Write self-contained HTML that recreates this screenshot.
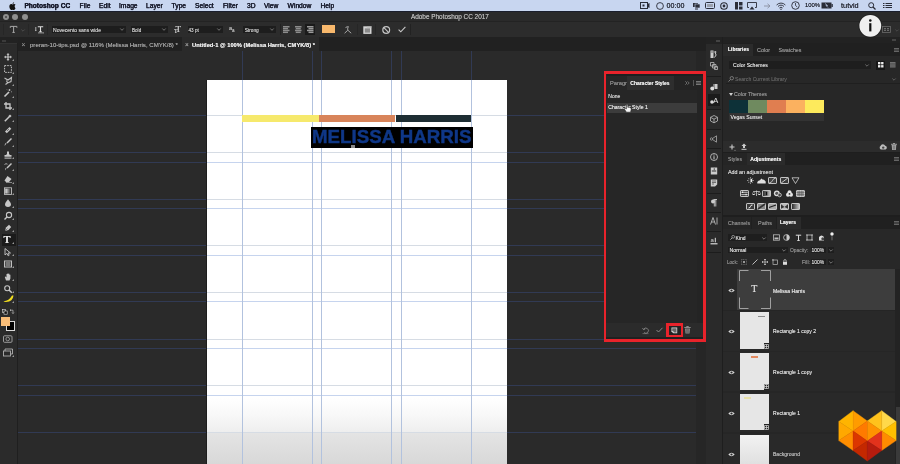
<!DOCTYPE html>
<html><head><meta charset="utf-8">
<style>
*{margin:0;padding:0;box-sizing:border-box}
html,body{width:900px;height:464px;overflow:hidden;background:#2a2a2a;font-family:"Liberation Sans",sans-serif}
.a{position:absolute}
.t{position:absolute;white-space:nowrap;line-height:1;text-shadow:0 0 0.5px currentColor}
svg{position:absolute;overflow:visible}
#root{position:absolute;left:0;top:0;width:900px;height:464px;overflow:hidden;will-change:transform}
</style></head><body><div id="root">
<div class="a" style="left:0px;top:51px;width:706px;height:413px;background:#2a2a2a;"></div>
<div class="a" style="left:206px;top:80px;width:1px;height:384px;background:#1d1d1d;"></div>
<div class="a" style="left:207px;top:80px;width:300px;height:384px;background:linear-gradient(#fff 0px,#fff 318px,#f8f8f8 335px,#eeeeee 352px,#e4e4e4 353px,#d8d8d8 384px)"></div>
<div class="a" style="left:18px;top:114.8px;width:188px;height:1px;background:#313a54;"></div>
<div class="a" style="left:507px;top:114.8px;width:199px;height:1px;background:#313a54;"></div>
<div class="a" style="left:207px;top:114.8px;width:300px;height:1px;background:#d6dce4;"></div>
<div class="a" style="left:18px;top:152.2px;width:188px;height:1px;background:#313a54;"></div>
<div class="a" style="left:507px;top:152.2px;width:199px;height:1px;background:#313a54;"></div>
<div class="a" style="left:207px;top:152.2px;width:300px;height:1px;background:#d6dce4;"></div>
<div class="a" style="left:18px;top:161.5px;width:188px;height:1px;background:#313a54;"></div>
<div class="a" style="left:507px;top:161.5px;width:199px;height:1px;background:#313a54;"></div>
<div class="a" style="left:207px;top:161.5px;width:300px;height:1px;background:#c6d4ee;"></div>
<div class="a" style="left:18px;top:198.8px;width:188px;height:1px;background:#313a54;"></div>
<div class="a" style="left:507px;top:198.8px;width:199px;height:1px;background:#313a54;"></div>
<div class="a" style="left:207px;top:198.8px;width:300px;height:1px;background:#d6dce4;"></div>
<div class="a" style="left:18px;top:208.2px;width:188px;height:1px;background:#313a54;"></div>
<div class="a" style="left:507px;top:208.2px;width:199px;height:1px;background:#313a54;"></div>
<div class="a" style="left:207px;top:208.2px;width:300px;height:1px;background:#c6d4ee;"></div>
<div class="a" style="left:18px;top:245.2px;width:188px;height:1px;background:#313a54;"></div>
<div class="a" style="left:507px;top:245.2px;width:199px;height:1px;background:#313a54;"></div>
<div class="a" style="left:207px;top:245.2px;width:300px;height:1px;background:#d6dce4;"></div>
<div class="a" style="left:18px;top:254.6px;width:188px;height:1px;background:#313a54;"></div>
<div class="a" style="left:507px;top:254.6px;width:199px;height:1px;background:#313a54;"></div>
<div class="a" style="left:207px;top:254.6px;width:300px;height:1px;background:#c6d4ee;"></div>
<div class="a" style="left:18px;top:291.5px;width:188px;height:1px;background:#313a54;"></div>
<div class="a" style="left:507px;top:291.5px;width:199px;height:1px;background:#313a54;"></div>
<div class="a" style="left:207px;top:291.5px;width:300px;height:1px;background:#d6dce4;"></div>
<div class="a" style="left:18px;top:301.1px;width:188px;height:1px;background:#313a54;"></div>
<div class="a" style="left:507px;top:301.1px;width:199px;height:1px;background:#313a54;"></div>
<div class="a" style="left:207px;top:301.1px;width:300px;height:1px;background:#c6d4ee;"></div>
<div class="a" style="left:18px;top:338.6px;width:188px;height:1px;background:#313a54;"></div>
<div class="a" style="left:507px;top:338.6px;width:199px;height:1px;background:#313a54;"></div>
<div class="a" style="left:207px;top:338.6px;width:300px;height:1px;background:#d6dce4;"></div>
<div class="a" style="left:18px;top:347.9px;width:188px;height:1px;background:#313a54;"></div>
<div class="a" style="left:507px;top:347.9px;width:199px;height:1px;background:#313a54;"></div>
<div class="a" style="left:207px;top:347.9px;width:300px;height:1px;background:#c6d4ee;"></div>
<div class="a" style="left:18px;top:385.4px;width:188px;height:1px;background:#313a54;"></div>
<div class="a" style="left:507px;top:385.4px;width:199px;height:1px;background:#313a54;"></div>
<div class="a" style="left:207px;top:385.4px;width:300px;height:1px;background:#d6dce4;"></div>
<div class="a" style="left:18px;top:394.5px;width:188px;height:1px;background:#313a54;"></div>
<div class="a" style="left:507px;top:394.5px;width:199px;height:1px;background:#313a54;"></div>
<div class="a" style="left:207px;top:394.5px;width:300px;height:1px;background:#c6d4ee;"></div>
<div class="a" style="left:18px;top:431.8px;width:188px;height:1px;background:#313a54;"></div>
<div class="a" style="left:507px;top:431.8px;width:199px;height:1px;background:#313a54;"></div>
<div class="a" style="left:207px;top:431.8px;width:300px;height:1px;background:#d6dce4;"></div>
<div class="a" style="left:241.8px;top:51px;width:1px;height:29px;background:#313a54;"></div>
<div class="a" style="left:241.8px;top:80px;width:1px;height:384px;background:#b2c2de;"></div>
<div class="a" style="left:311.8px;top:51px;width:1px;height:29px;background:#313a54;"></div>
<div class="a" style="left:311.8px;top:80px;width:1px;height:384px;background:#b2c2de;"></div>
<div class="a" style="left:321.1px;top:51px;width:1px;height:29px;background:#313a54;"></div>
<div class="a" style="left:321.1px;top:80px;width:1px;height:384px;background:#b2c2de;"></div>
<div class="a" style="left:391.2px;top:51px;width:1px;height:29px;background:#313a54;"></div>
<div class="a" style="left:391.2px;top:80px;width:1px;height:384px;background:#b2c2de;"></div>
<div class="a" style="left:401.0px;top:51px;width:1px;height:29px;background:#313a54;"></div>
<div class="a" style="left:401.0px;top:80px;width:1px;height:384px;background:#b2c2de;"></div>
<div class="a" style="left:470.8px;top:51px;width:1px;height:29px;background:#313a54;"></div>
<div class="a" style="left:470.8px;top:80px;width:1px;height:384px;background:#b2c2de;"></div>
<div class="a" style="left:242.2px;top:115.2px;width:76.4px;height:7.1px;background:#f6e96c;"></div>
<div class="a" style="left:318.6px;top:115.2px;width:76.9px;height:7.1px;background:#d8845a;"></div>
<div class="a" style="left:395.5px;top:115.2px;width:75.8px;height:7.1px;background:#1e2e33;"></div>
<div class="a" style="left:310.8px;top:127px;width:161.9px;height:21px;background:#000;"></div>
<span class="t" style="left:312.4px;top:127.1px;font-size:19.2px;font-weight:bold;color:#0f3787;-webkit-text-stroke:0.45px #0f3787;text-shadow:none;transform-origin:0 0;transform:scaleX(0.975)">MELISSA HARRIS</span>
<div class="a" style="left:351px;top:144.5px;width:4px;height:3px;background:#8a8a8a;"></div>
<div class="a" style="left:0px;top:0px;width:900px;height:10.5px;background:#c8d6f0;"></div>
<div class="a" style="left:0px;top:10.5px;width:900px;height:1px;background:#1a1e2c;"></div>
<span class="t" style="left:24.4px;top:2.80px;font-size:6.62px;color:#181b2c;font-weight:bold;-webkit-text-stroke:0.25px #181b2c">Photoshop CC</span>
<span class="t" style="left:79.6px;top:2.80px;font-size:6.7px;color:#181b2c;font-weight:normal;-webkit-text-stroke:0.25px #181b2c">File</span>
<span class="t" style="left:99px;top:2.80px;font-size:6.7px;color:#181b2c;font-weight:normal;-webkit-text-stroke:0.25px #181b2c">Edit</span>
<span class="t" style="left:119px;top:2.80px;font-size:6.7px;color:#181b2c;font-weight:normal;-webkit-text-stroke:0.25px #181b2c">Image</span>
<span class="t" style="left:146px;top:2.80px;font-size:6.7px;color:#181b2c;font-weight:normal;-webkit-text-stroke:0.25px #181b2c">Layer</span>
<span class="t" style="left:171.6px;top:2.80px;font-size:6.7px;color:#181b2c;font-weight:normal;-webkit-text-stroke:0.25px #181b2c">Type</span>
<span class="t" style="left:195px;top:2.80px;font-size:6.7px;color:#181b2c;font-weight:normal;-webkit-text-stroke:0.25px #181b2c">Select</span>
<span class="t" style="left:223px;top:2.80px;font-size:6.7px;color:#181b2c;font-weight:normal;-webkit-text-stroke:0.25px #181b2c">Filter</span>
<span class="t" style="left:247px;top:2.80px;font-size:6.7px;color:#181b2c;font-weight:normal;-webkit-text-stroke:0.25px #181b2c">3D</span>
<span class="t" style="left:264px;top:2.80px;font-size:6.7px;color:#181b2c;font-weight:normal;-webkit-text-stroke:0.25px #181b2c">View</span>
<span class="t" style="left:287.6px;top:2.80px;font-size:6.7px;color:#181b2c;font-weight:normal;-webkit-text-stroke:0.25px #181b2c">Window</span>
<span class="t" style="left:320.4px;top:2.80px;font-size:6.7px;color:#181b2c;font-weight:normal;-webkit-text-stroke:0.25px #181b2c">Help</span>
<svg style="left:9px;top:1.5px" width="7" height="8" viewBox="0 0 14 17"><path d="M11.6 9c0-2 1.7-3 1.8-3.1-1-1.4-2.5-1.6-3-1.6-1.3-.1-2.5.8-3.1.8-.7 0-1.7-.8-2.8-.7C3 4.4 1.7 5.2 1 6.5c-1.5 2.6-.4 6.4 1 8.5.7 1 1.5 2.1 2.6 2.1 1 0 1.4-.7 2.7-.7s1.6.7 2.7.7c1.1 0 1.8-1 2.5-2 .8-1.1 1.1-2.2 1.1-2.3-.1 0-2-.8-2-3.8zM9.6 2.9C10.2 2.2 10.5 1.3 10.4.5 9.6.5 8.7 1 8.1 1.7c-.5.6-1 1.5-.9 2.4.9.1 1.8-.5 2.4-1.2z" fill="#111"/></svg>
<svg style="left:640px;top:2px" width="10" height="7" viewBox="0 0 10 7"><rect x="0.5" y="0.5" width="7" height="6" fill="none" stroke="#2a2d38" stroke-width="1"/><rect x="2.5" y="2.5" width="2" height="2" fill="#2a2d38"/><path d="M7.5 2 L9.5 1 V6 L7.5 5z" fill="#2a2d38"/></svg>
<svg style="left:656px;top:1.5px" width="8" height="8" viewBox="0 0 8 8"><circle cx="4" cy="4" r="3.4" fill="none" stroke="#2a2d38" stroke-width="0.9"/></svg>
<span class="t" style="left:666.5px;top:1.90px;font-size:7.2px;color:#2a2d38;font-weight:normal;">00:00</span>
<svg style="left:692px;top:1.5px" width="9" height="8" viewBox="0 0 9 8"><rect x="1" y="1" width="5" height="4" fill="#2a2d38"/><rect x="3" y="2" width="5" height="4" fill="#2a2d38" stroke="#c8d6f0" stroke-width="0.6"/><rect x="3" y="6.5" width="3" height="1" fill="#2a2d38"/></svg>
<svg style="left:704.5px;top:2px" width="10" height="7" viewBox="0 0 10 7"><rect x="0.5" y="0.5" width="9" height="6" rx="1" fill="none" stroke="#2a2d38" stroke-width="1"/><rect x="2" y="2" width="6" height="3" fill="#9aa0ad"/></svg>
<svg style="left:720px;top:1.5px" width="8" height="8" viewBox="0 0 8 8"><circle cx="4" cy="4" r="3.3" fill="none" stroke="#2a2d38" stroke-width="1.1"/><circle cx="4" cy="4" r="1.4" fill="#2a2d38"/></svg>
<svg style="left:734.5px;top:1.8px" width="8" height="8" viewBox="0 0 8 8"><rect x="0" y="0" width="3" height="7.5" fill="#2a2d38"/><rect x="4" y="0" width="3.5" height="3.5" fill="#2a2d38"/><rect x="4" y="4.5" width="3.5" height="3" fill="#2a2d38"/></svg>
<svg style="left:747.4px;top:1.8px" width="10" height="8" viewBox="0 0 10 8"><path d="M2 5.5 H0.5 V0.5 H9.5 V5.5 H8" fill="none" stroke="#2a2d38" stroke-width="0.9"/><path d="M2.5 7.5 L5 4.5 L7.5 7.5z" fill="#2a2d38"/></svg>
<svg style="left:763.5px;top:2.5px" width="7" height="6" viewBox="0 0 7 6"><path d="M0 3 H6 M3.5 0.8 L6 3 L3.5 5.2" fill="none" stroke="#8a90a0" stroke-width="0.9"/></svg>
<svg style="left:776px;top:1.5px" width="10" height="8" viewBox="0 0 10 8"><path d="M0.6 3 A6 6 0 0 1 9.4 3 M2 4.5 A4 4 0 0 1 8 4.5 M3.4 6 A2.2 2.2 0 0 1 6.6 6" fill="none" stroke="#2a2d38" stroke-width="0.9"/><circle cx="5" cy="7.3" r="0.7" fill="#2a2d38"/></svg>
<svg style="left:791px;top:1.3px" width="9" height="9" viewBox="0 0 9 9"><circle cx="4.5" cy="4.5" r="3.8" fill="none" stroke="#2a2d38" stroke-width="0.9"/><path d="M4.5 2 V4.5 L6.3 6" fill="none" stroke="#2a2d38" stroke-width="0.8"/></svg>
<span class="t" style="left:805px;top:3.49px;font-size:5.9px;color:#2a2d38;font-weight:normal;">100%</span>
<svg style="left:820.6px;top:2px" width="12" height="7" viewBox="0 0 12 7"><rect x="0.5" y="0.5" width="10" height="6" fill="#2a2d38"/><rect x="10.5" y="2" width="1.3" height="3" fill="#2a2d38"/><path d="M4 1.5 L6.5 3.5 L5 3.5 L7 5.5" stroke="#c8d6f0" stroke-width="0.7" fill="none"/></svg>
<span class="t" style="left:841px;top:1.90px;font-size:7.4px;color:#2a2d38;font-weight:normal;">tutvid</span>
<svg style="left:868px;top:1.5px" width="8" height="8" viewBox="0 0 8 8"><circle cx="3.2" cy="3.2" r="2.5" fill="none" stroke="#2a2d38" stroke-width="1"/><path d="M5 5 L7.5 7.5" stroke="#2a2d38" stroke-width="1.2"/></svg>
<svg style="left:883px;top:2.5px" width="9" height="6" viewBox="0 0 9 6"><path d="M0 0.5 H1.5 M2.5 0.5 H9 M0 2.5 H1.5 M2.5 2.5 H9 M0 4.5 H1.5 M2.5 4.5 H9" stroke="#2a2d38" stroke-width="1"/></svg>
<div class="a" style="left:0px;top:11.5px;width:900px;height:10px;background:#2a2a2a;"></div>
<div class="a" style="left:2.6999999999999997px;top:13.799999999999999px;width:6.2px;height:6.2px;border-radius:50%;background:#8f8f8f"></div>
<div class="a" style="left:12.200000000000001px;top:13.799999999999999px;width:6.2px;height:6.2px;border-radius:50%;background:#8f8f8f"></div>
<div class="a" style="left:21.7px;top:13.799999999999999px;width:6.2px;height:6.2px;border-radius:50%;background:#8f8f8f"></div>
<div class="a" style="left:4.8px;top:15.9px;width:2px;height:2px;background:#444;border-radius:50%"></div>
<span class="t" style="left:411px;top:14.30px;font-size:6.4px;color:#b5b5b5;font-weight:normal;">Adobe Photoshop CC 2017</span>
<div class="a" style="left:0px;top:21.2px;width:900px;height:15.8px;background:#2c2c2c;"></div>
<div class="a" style="left:0px;top:21.2px;width:900px;height:0.7px;background:#232323;"></div>
<div class="a" style="left:0px;top:37px;width:706px;height:14px;background:#212121;"></div>
<span class="t" style="left:21.5px;top:41.50px;font-size:6.5px;color:#8a8a8a;font-weight:normal;">×</span>
<span class="t" style="left:30px;top:42.10px;font-size:6.07px;color:#a0a0a0;font-weight:normal;">preran-10-tips.psd @ 116% (Melissa Harris, CMYK/8) *</span>
<div class="a" style="left:182px;top:37px;width:137px;height:14px;background:#2a2a2a;"></div>
<span class="t" style="left:185px;top:41.50px;font-size:6.5px;color:#9a9a9a;font-weight:normal;">×</span>
<span class="t" style="left:192px;top:42.95px;font-size:5.74px;color:#e6e6e6;font-weight:bold;">Untitled-1 @ 100% (Melissa Harris, CMYK/8) *</span>
<div class="a" style="left:0px;top:37px;width:18px;height:427px;background:#2b2b2b;"></div>
<div class="a" style="left:0px;top:37px;width:18px;height:6px;background:#222222;"></div>
<svg style="left:1.5px;top:39.5px" width="4" height="2" viewBox="0 0 4 2"><path d="M0 0.5 H4 M0 1.5 H4" stroke="#555" stroke-width="0.5"/></svg>
<div class="a" style="left:17px;top:43px;width:1px;height:421px;background:#1f1f1f;"></div>
<div class="a" style="left:0px;top:43px;width:17px;height:0.6px;background:#333333;"></div>
<div class="a" style="left:2.5px;top:24px;width:0.8px;height:11px;background:#262626;"></div>
<div class="a" style="left:28.2px;top:24px;width:0.8px;height:11px;background:#262626;"></div>
<div class="a" style="left:47.3px;top:24px;width:0.8px;height:11px;background:#262626;"></div>
<svg style="left:9.8px;top:26.2px" width="7.2" height="6.8" viewBox="0 0 7.2 6.8"><path d="M0.3 1.8 V0.4 H6.9 V1.8 M3.6 0.4 V6.4 M2.4 6.4 H4.8" fill="none" stroke="#a8a8a8" stroke-width="1"/></svg>
<svg style="left:20.5px;top:28.5px" width="4" height="3" viewBox="0 0 4 3"><path d="M0.3 0.5 L2 2.2 L3.7 0.5" fill="none" stroke="#5a5a5a" stroke-width="0.7"/></svg>
<svg style="left:34.5px;top:25.8px" width="9" height="7.5" viewBox="0 0 9 7.5"><path d="M2.8 0.8 H8.2 M5.5 0.8 V5.6 M4.4 5.6 H6.6" fill="none" stroke="#dedede" stroke-width="1.1"/><path d="M0.8 1 V4.5" stroke="#cfcfcf" stroke-width="0.8"/><path d="M0 4 L0.8 5.2 L1.6 4z" fill="#cfcfcf"/><path d="M3 6.9 H8.5" stroke="#cfcfcf" stroke-width="0.7"/><path d="M8 6.2 L8.8 6.9 L8 7.5z" fill="#cfcfcf"/></svg>
<div class="a" style="left:52px;top:26.2px;width:74px;height:6.6px;background:#1d1d1d;"></div>
<span class="t" style="left:53px;top:27.70px;font-size:5.05px;color:#c8c8c8;font-weight:normal;">Novecento sans wide</span>
<svg style="left:120px;top:28.4px" width="4" height="3" viewBox="0 0 4 3"><path d="M0.3 0.5 L2 2.3 L3.7 0.5" fill="none" stroke="#9a9a9a" stroke-width="0.7"/></svg>
<div class="a" style="left:130.5px;top:26.2px;width:37.0px;height:6.6px;background:#1d1d1d;"></div>
<span class="t" style="left:132px;top:28.70px;font-size:4.6px;color:#c8c8c8;font-weight:normal;">Bold</span>
<svg style="left:161.5px;top:28.4px" width="4" height="3" viewBox="0 0 4 3"><path d="M0.3 0.5 L2 2.3 L3.7 0.5" fill="none" stroke="#9a9a9a" stroke-width="0.7"/></svg>
<span class="t" style="left:175.5px;top:25px;font-size:9px;font-family:'Liberation Serif';color:#c8c8c8">T</span>
<span class="t" style="left:174px;top:27.5px;font-size:6px;font-family:'Liberation Serif';color:#c8c8c8">T</span>
<div class="a" style="left:187.5px;top:26.2px;width:35.0px;height:6.6px;background:#1d1d1d;"></div>
<span class="t" style="left:188.5px;top:28.70px;font-size:4.6px;color:#c8c8c8;font-weight:normal;">43 pt</span>
<svg style="left:216.5px;top:28.4px" width="4" height="3" viewBox="0 0 4 3"><path d="M0.3 0.5 L2 2.3 L3.7 0.5" fill="none" stroke="#9a9a9a" stroke-width="0.7"/></svg>
<span class="t" style="left:229px;top:25.5px;font-size:5.5px;color:#b8b8b8">a</span>
<span class="t" style="left:232px;top:28.5px;font-size:4.5px;color:#b8b8b8">a</span>
<div class="a" style="left:243px;top:26.2px;width:33px;height:6.6px;background:#1d1d1d;"></div>
<span class="t" style="left:244.7px;top:28.70px;font-size:4.75px;color:#c8c8c8;font-weight:normal;">Strong</span>
<svg style="left:270px;top:28.4px" width="4" height="3" viewBox="0 0 4 3"><path d="M0.3 0.5 L2 2.3 L3.7 0.5" fill="none" stroke="#9a9a9a" stroke-width="0.7"/></svg>
<div class="a" style="left:279.5px;top:24px;width:0.8px;height:11px;background:#222;"></div>
<div class="a" style="left:305px;top:24px;width:10px;height:11px;background:#1a1a1a;"></div>
<svg style="left:282.8px;top:25.8px" width="7" height="8" viewBox="0 0 7 8"><rect x="0" y="0.00" width="6.5" height="1.5" fill="#8c8c8c"/><rect x="0" y="1.85" width="5" height="1.5" fill="#8c8c8c"/><rect x="0" y="3.70" width="6.5" height="1.5" fill="#8c8c8c"/><rect x="0" y="5.55" width="5" height="1.5" fill="#8c8c8c"/></svg>
<svg style="left:295.2px;top:25.8px" width="7" height="8" viewBox="0 0 7 8"><rect x="0" y="0.00" width="6.5" height="1.5" fill="#8c8c8c"/><rect x="0.75" y="1.85" width="5" height="1.5" fill="#8c8c8c"/><rect x="0" y="3.70" width="6.5" height="1.5" fill="#8c8c8c"/><rect x="0.75" y="5.55" width="5" height="1.5" fill="#8c8c8c"/></svg>
<svg style="left:306.8px;top:25.8px" width="7" height="8" viewBox="0 0 7 8"><rect x="0" y="0.00" width="6.5" height="1.5" fill="#9a9a9a"/><rect x="1.5" y="1.85" width="5" height="1.5" fill="#9a9a9a"/><rect x="0" y="3.70" width="6.5" height="1.5" fill="#9a9a9a"/><rect x="1.5" y="5.55" width="5" height="1.5" fill="#9a9a9a"/></svg>
<div class="a" style="left:322.2px;top:25.2px;width:13px;height:7.8px;background:#f8b86c;"></div>
<svg style="left:343.8px;top:25.8px" width="8" height="8" viewBox="0 0 8 8"><path d="M1.5 1.6 Q3 0.2 5 1 M3.8 1.4 Q3.6 3 3.8 4.2 L0.6 7.2 M3.8 4.2 L7.2 7.2" fill="none" stroke="#a8a8a8" stroke-width="1"/></svg>
<div class="a" style="left:357px;top:24px;width:0.8px;height:11px;background:#262626;"></div>
<div class="a" style="left:375.2px;top:24px;width:0.8px;height:11px;background:#262626;"></div>
<svg style="left:362.5px;top:26px" width="9" height="8" viewBox="0 0 9 8"><rect x="0.3" y="0.3" width="8.2" height="7.6" fill="#d4d4d4"/><rect x="1.8" y="2.4" width="5.2" height="4.2" fill="#8a8a8a"/><rect x="3.8" y="0.3" width="4.7" height="1.2" fill="#b0b0b0"/></svg>
<svg style="left:381.5px;top:25.5px" width="9" height="9" viewBox="0 0 9 9"><circle cx="4.2" cy="4" r="3.4" fill="none" stroke="#c4c4c4" stroke-width="1.2"/><path d="M1.9 1.7 L6.5 6.3" stroke="#c4c4c4" stroke-width="1.2"/></svg>
<svg style="left:397.5px;top:26px" width="8" height="7" viewBox="0 0 8 7"><path d="M0.6 3.6 L2.8 5.8 L7.4 0.8" fill="none" stroke="#c8c8c8" stroke-width="1.1"/></svg>
<div class="a" style="left:410px;top:24px;width:0.8px;height:11px;background:#222;"></div>
<svg style="left:882px;top:26px" width="9" height="7" viewBox="0 0 9 7"><rect x="0.5" y="0.5" width="8" height="6" fill="none" stroke="#6a6a6a" stroke-width="0.8"/><rect x="2" y="2" width="2" height="1.2" fill="#6a6a6a"/><rect x="5" y="2" width="2" height="1.2" fill="#6a6a6a"/><rect x="2" y="3.8" width="2" height="1.2" fill="#6a6a6a"/><rect x="5" y="3.8" width="2" height="1.2" fill="#6a6a6a"/></svg>
<svg style="left:895px;top:29px" width="4" height="3" viewBox="0 0 4 3"><path d="M0.3 0.5 L2 2.2 L3.7 0.5" fill="none" stroke="#555" stroke-width="0.7"/></svg>
<svg width="0" height="0" style="left:0;top:0"><defs><linearGradient id="gr"><stop offset="0" stop-color="#eee"/><stop offset="1" stop-color="#333"/></linearGradient></defs></svg>
<svg style="left:4.2px;top:52.5px" width="8" height="8" viewBox="0 0 8 8"><path d="M4 0 L5.5 1.8 H4.6 V3.4 H6.2 V2.5 L8 4 L6.2 5.5 V4.6 H4.6 V6.2 H5.5 L4 8 L2.5 6.2 H3.4 V4.6 H1.8 V5.5 L0 4 L1.8 2.5 V3.4 H3.4 V1.8 H2.5z" fill="#c8c8c8"/></svg>
<svg style="left:12.2px;top:59.0px" width="2" height="2" viewBox="0 0 2 2"><path d="M2 0 V2 H0z" fill="#9a9a9a"/></svg>
<svg style="left:4.2px;top:65.3px" width="8" height="8" viewBox="0 0 8 8"><rect x="0.6" y="0.6" width="6.8" height="6.8" fill="none" stroke="#c0c0c0" stroke-width="1" stroke-dasharray="1.6 1"/></svg>
<svg style="left:12.2px;top:71.8px" width="2" height="2" viewBox="0 0 2 2"><path d="M2 0 V2 H0z" fill="#9a9a9a"/></svg>
<svg style="left:4.2px;top:77.4px" width="8" height="8" viewBox="0 0 8 8"><path d="M0.5 1 L4 3 L7.5 0.5 L7 4.5 L3.5 6 L1.5 7.5 M3.5 6 L2.5 3.5" fill="none" stroke="#c0c0c0" stroke-width="1.1"/></svg>
<svg style="left:12.2px;top:83.9px" width="2" height="2" viewBox="0 0 2 2"><path d="M2 0 V2 H0z" fill="#9a9a9a"/></svg>
<svg style="left:4.2px;top:89.4px" width="8" height="8" viewBox="0 0 8 8"><path d="M0.5 7.5 L5 3" stroke="#c8c8c8" stroke-width="1.6"/><path d="M5.5 0 V2 M4.5 1 H6.5 M7.2 2.5 L8 3.3 M3 0.6 L3.6 1.2" stroke="#c8c8c8" stroke-width="0.8"/></svg>
<svg style="left:12.2px;top:95.9px" width="2" height="2" viewBox="0 0 2 2"><path d="M2 0 V2 H0z" fill="#9a9a9a"/></svg>
<svg style="left:4.2px;top:101.5px" width="8" height="8" viewBox="0 0 8 8"><path d="M2 0 V6 H8 M0 2 H6 V8" fill="none" stroke="#c8c8c8" stroke-width="1.3"/></svg>
<svg style="left:12.2px;top:108.0px" width="2" height="2" viewBox="0 0 2 2"><path d="M2 0 V2 H0z" fill="#9a9a9a"/></svg>
<svg style="left:4.2px;top:113.6px" width="8" height="8" viewBox="0 0 8 8"><path d="M0.8 7.2 L5 3" stroke="#c8c8c8" stroke-width="1.5"/><path d="M4.2 2.2 L6 0.5 L7.6 2 L5.8 3.8z" fill="#c8c8c8"/></svg>
<svg style="left:12.2px;top:120.1px" width="2" height="2" viewBox="0 0 2 2"><path d="M2 0 V2 H0z" fill="#9a9a9a"/></svg>
<svg style="left:4.2px;top:126.30000000000001px" width="8" height="8" viewBox="0 0 8 8"><path d="M1 5.5 L5.5 1 L7.3 2.8 L2.8 7.3z" fill="#c8c8c8"/><path d="M3 4 L4 5 M4 3 L5 4" stroke="#333" stroke-width="0.6"/></svg>
<svg style="left:12.2px;top:132.8px" width="2" height="2" viewBox="0 0 2 2"><path d="M2 0 V2 H0z" fill="#9a9a9a"/></svg>
<svg style="left:4.2px;top:138.4px" width="8" height="8" viewBox="0 0 8 8"><path d="M7.5 0.5 L3 5" stroke="#c8c8c8" stroke-width="1.4"/><path d="M2.8 4.8 L1 7.5 L0.5 7.6 L1.2 5.4z" fill="#c8c8c8"/></svg>
<svg style="left:12.2px;top:144.9px" width="2" height="2" viewBox="0 0 2 2"><path d="M2 0 V2 H0z" fill="#9a9a9a"/></svg>
<svg style="left:4.2px;top:150.5px" width="8" height="8" viewBox="0 0 8 8"><path d="M3 0.5 H5 V3 L6 4 H7.5 V5.8 H0.5 V4 H2 L3 3z" fill="#c8c8c8"/><rect x="0.5" y="6.6" width="7" height="1" fill="#c8c8c8"/></svg>
<svg style="left:12.2px;top:157.0px" width="2" height="2" viewBox="0 0 2 2"><path d="M2 0 V2 H0z" fill="#9a9a9a"/></svg>
<svg style="left:4.2px;top:162.6px" width="8" height="8" viewBox="0 0 8 8"><path d="M7.5 0.5 L3 5" stroke="#c8c8c8" stroke-width="1.4"/><path d="M2.8 4.8 L1 7.5 L1.2 5.4z" fill="#c8c8c8"/><path d="M0.5 1.5 Q2 0 3.5 1.2" fill="none" stroke="#c8c8c8" stroke-width="0.8"/></svg>
<svg style="left:12.2px;top:169.1px" width="2" height="2" viewBox="0 0 2 2"><path d="M2 0 V2 H0z" fill="#9a9a9a"/></svg>
<svg style="left:4.2px;top:175px" width="8" height="8" viewBox="0 0 8 8"><path d="M3.5 1 L7.5 4 L5 7 H2 L0.5 5.5z" fill="#c8c8c8"/><path d="M2 7.5 H8" stroke="#c8c8c8" stroke-width="0.6"/></svg>
<svg style="left:12.2px;top:181.5px" width="2" height="2" viewBox="0 0 2 2"><path d="M2 0 V2 H0z" fill="#9a9a9a"/></svg>
<svg style="left:4.2px;top:186.8px" width="8" height="8" viewBox="0 0 8 8"><rect x="0.5" y="0.8" width="7" height="6.6" fill="none" stroke="#c0c0c0" stroke-width="0.9"/><rect x="1.3" y="1.6" width="5.4" height="5" fill="url(#gr)"/></svg>
<svg style="left:12.2px;top:193.3px" width="2" height="2" viewBox="0 0 2 2"><path d="M2 0 V2 H0z" fill="#9a9a9a"/></svg>
<svg style="left:4.2px;top:199.4px" width="8" height="8" viewBox="0 0 8 8"><path d="M4 0.3 Q7 4 7 5.3 A3 2.7 0 0 1 1 5.3 Q1 4 4 0.3z" fill="#c8c8c8"/></svg>
<svg style="left:12.2px;top:205.9px" width="2" height="2" viewBox="0 0 2 2"><path d="M2 0 V2 H0z" fill="#9a9a9a"/></svg>
<svg style="left:4.2px;top:211.5px" width="8" height="8" viewBox="0 0 8 8"><circle cx="5" cy="3" r="2.6" fill="none" stroke="#c8c8c8" stroke-width="1.1"/><path d="M3.2 4.8 L0.5 7.5" stroke="#c8c8c8" stroke-width="1.4"/></svg>
<svg style="left:12.2px;top:218.0px" width="2" height="2" viewBox="0 0 2 2"><path d="M2 0 V2 H0z" fill="#9a9a9a"/></svg>
<svg style="left:4.2px;top:223.6px" width="8" height="8" viewBox="0 0 8 8"><path d="M1 7 L2 3.5 L5 0.8 L7.2 3 L4.5 6z" fill="#c8c8c8"/><path d="M1 7 L3.5 4.5" stroke="#444" stroke-width="0.6"/></svg>
<svg style="left:12.2px;top:230.1px" width="2" height="2" viewBox="0 0 2 2"><path d="M2 0 V2 H0z" fill="#9a9a9a"/></svg>
<svg style="left:4.2px;top:247.7px" width="8" height="8" viewBox="0 0 8 8"><path d="M1 0.5 V7 L2.8 5.4 L4.2 7.8 L5.2 7.2 L4 5 H6.5z" fill="none" stroke="#c8c8c8" stroke-width="0.9"/></svg>
<svg style="left:12.2px;top:254.2px" width="2" height="2" viewBox="0 0 2 2"><path d="M2 0 V2 H0z" fill="#9a9a9a"/></svg>
<svg style="left:4.2px;top:259.8px" width="8" height="8" viewBox="0 0 8 8"><rect x="0.5" y="1" width="7" height="6" fill="none" stroke="#c0c0c0" stroke-width="1"/><rect x="1.5" y="2" width="5" height="4" fill="#777"/></svg>
<svg style="left:12.2px;top:266.3px" width="2" height="2" viewBox="0 0 2 2"><path d="M2 0 V2 H0z" fill="#9a9a9a"/></svg>
<svg style="left:4.2px;top:272.6px" width="8" height="8" viewBox="0 0 8 8"><path d="M2 7.5 L0.8 4 L1.6 3.4 L2.5 4.5 V1 L3.4 1 V3.5 V0.4 H4.4 V3.5 V0.8 H5.4 V3.8 V1.8 H6.4 V5.5 L5.5 7.5z" fill="#c8c8c8"/></svg>
<svg style="left:12.2px;top:279.1px" width="2" height="2" viewBox="0 0 2 2"><path d="M2 0 V2 H0z" fill="#9a9a9a"/></svg>
<svg style="left:4.2px;top:284.6px" width="8" height="8" viewBox="0 0 8 8"><circle cx="3.2" cy="3.2" r="2.5" fill="none" stroke="#c8c8c8" stroke-width="1.1"/><path d="M5 5 L7.8 7.8" stroke="#c8c8c8" stroke-width="1.5"/></svg>
<svg style="left:12.2px;top:291.1px" width="2" height="2" viewBox="0 0 2 2"><path d="M2 0 V2 H0z" fill="#9a9a9a"/></svg>
<div class="a" style="left:1.5px;top:233.5px;width:14px;height:12.5px;background:#1b1b1b;"></div>
<span class="t" style="left:3.6px;top:234.6px;font-size:10.5px;font-family:'Liberation Serif';font-weight:bold;color:#e0e0e0">T</span>
<svg style="left:12.2px;top:242px" width="2" height="2" viewBox="0 0 2 2"><path d="M2 0 V2 H0z" fill="#9a9a9a"/></svg>
<svg style="left:2.5px;top:294.5px" width="11" height="8" viewBox="0 0 11 8"><path d="M10.5 0.5 Q10 6.5 3 7 Q1 7 0.5 6.3 Q6 6 9 0.5z" fill="#f0dc20"/></svg>
<svg style="left:12.2px;top:301px" width="2" height="2" viewBox="0 0 2 2"><path d="M2 0 V2 H0z" fill="#9a9a9a"/></svg>
<svg style="left:2px;top:309px" width="13" height="6" viewBox="0 0 13 6"><rect x="0.3" y="0.3" width="3.2" height="3.2" fill="none" stroke="#ddd" stroke-width="0.6"/><rect x="2" y="2" width="3.2" height="3.2" fill="#111" stroke="#ddd" stroke-width="0.6"/><path d="M8 1.2 H11 V4.2 M10 3.5 L11 4.7 L12 3.5 M9 0.4 L8 1.2 L9 2" fill="none" stroke="#ccc" stroke-width="0.6"/></svg>
<div class="a" style="left:5.5px;top:321px;width:9px;height:9.8px;background:#000;border:1px solid #d8d8d8"></div>
<div class="a" style="left:1.4px;top:317px;width:8.3px;height:9.3px;background:#f8bd78;"></div>
<svg style="left:3px;top:335px" width="10" height="8" viewBox="0 0 10 8"><rect x="0.5" y="0.8" width="8.5" height="6.5" rx="1" fill="none" stroke="#a8a8a8" stroke-width="0.9"/><circle cx="4.7" cy="4" r="1.8" fill="none" stroke="#a8a8a8" stroke-width="0.8"/></svg>
<svg style="left:3px;top:347.5px" width="11" height="9" viewBox="0 0 11 9"><rect x="0.5" y="3" width="7" height="5" fill="none" stroke="#b0b0b0" stroke-width="0.9"/><path d="M2 3 V1 H9.5 V6 H7.5" fill="none" stroke="#b0b0b0" stroke-width="0.9"/></svg>
<svg style="left:12.2px;top:355px" width="2" height="2" viewBox="0 0 2 2"><path d="M2 0 V2 H0z" fill="#9a9a9a"/></svg>
<div class="a" style="left:696px;top:51px;width:10px;height:413px;background:#262626;"></div>
<div class="a" style="left:603.6px;top:71px;width:102.2px;height:271px;background:#e8232b;"></div>
<div class="a" style="left:606.2px;top:73.6px;width:96.6px;height:265.6px;background:#262626;"></div>
<div class="a" style="left:697px;top:89.7px;width:6px;height:233.6px;background:#242424;"></div>
<div class="a" style="left:606.6px;top:73.6px;width:96.4px;height:2.8px;background:#1f1f1f;"></div>
<div class="a" style="left:606.6px;top:76.4px;width:96.4px;height:13.3px;background:#242424;"></div>
<div class="a" style="left:606.6px;top:76.4px;width:20.6px;height:13.3px;background:#262626;"></div>
<div class="a" style="left:627.2px;top:76.4px;width:46.5px;height:13.3px;background:#2e2e2e;"></div>
<span class="t" style="left:610px;top:81.09px;font-size:5.66px;color:#8c8c8c;font-weight:normal;">Paragr</span>
<span class="t" style="left:630.3px;top:80.95px;font-size:4.99px;color:#e4e4e4;font-weight:bold;">Character Styles</span>
<svg style="left:684.5px;top:81px" width="5" height="4" viewBox="0 0 5 4"><path d="M0.3 0.3 L2 2 L0.3 3.7 M2.5 0.3 L4.2 2 L2.5 3.7" fill="none" stroke="#8a8a8a" stroke-width="0.7"/></svg>
<div class="a" style="left:692.5px;top:80px;width:0.7px;height:6px;background:#555;"></div>
<svg style="left:696px;top:80.8px" width="5" height="4" viewBox="0 0 5 4"><path d="M0 0.5 H5 M0 2 H5 M0 3.5 H5" stroke="#8a8a8a" stroke-width="0.8"/></svg>
<span class="t" style="left:608.3px;top:93.50px;font-size:5.02px;color:#d0d0d0;font-weight:normal;">None</span>
<div class="a" style="left:606.6px;top:102.5px;width:90.4px;height:10.2px;background:#3c3c3c;"></div>
<span class="t" style="left:608.2px;top:104.60px;font-size:5.14px;color:#e0e0e0;font-weight:normal;">Character Style 1</span>
<svg style="left:624px;top:104px" width="8" height="9" viewBox="0 0 8 9"><path d="M2.4 0.6 Q3.2 0.1 3.8 0.7 V3.3 Q5.5 3.1 6.8 3.9 Q7.4 4.4 7.2 5.5 L6.6 8.2 H2.4 L0.5 5.2 Q0.3 4.3 1.2 4.3 L2.4 5z" fill="#f6f6f6" stroke="#222" stroke-width="0.6"/></svg>
<div class="a" style="left:606.2px;top:323.3px;width:96.6px;height:13.4px;background:#2b2b2b;"></div>
<div class="a" style="left:606.2px;top:336.7px;width:96.6px;height:2.8px;background:#202020;"></div>
<svg style="left:641.5px;top:326.5px" width="7" height="7" viewBox="0 0 7 7"><path d="M1.5 2.5 A2.6 2.6 0 1 1 2 5.5 M0.5 1 L1.5 2.6 L3.2 2" fill="none" stroke="#8a8a8a" stroke-width="0.8"/><path d="M0.5 6.6 H6.5" stroke="#8a8a8a" stroke-width="0.6"/></svg>
<svg style="left:655.5px;top:327px" width="7" height="6" viewBox="0 0 7 6"><path d="M0.5 3 L2.5 5 L6.5 0.8" fill="none" stroke="#8a8a8a" stroke-width="1"/></svg>
<div class="a" style="left:666.3px;top:323.3px;width:17px;height:13.7px;background:#e8232b;"></div>
<div class="a" style="left:668.6px;top:325.6px;width:12.4px;height:9.1px;background:#232323;"></div>
<svg style="left:671px;top:326.5px" width="7" height="7" viewBox="0 0 7 7"><path d="M0.5 0.5 H6.2 V6.2 H2.5 L0.5 4.2z" fill="#ddd"/><path d="M1.2 1.2 H5.5 V5.5 H2.8 L1.2 3.9z" fill="#666"/><path d="M0.5 4.2 H2.5 V6.2" fill="#ddd"/></svg>
<svg style="left:684px;top:326px" width="7" height="8" viewBox="0 0 7 8"><rect x="0.3" y="1" width="6.4" height="1" fill="#8a8a8a"/><rect x="2.3" y="0" width="2.4" height="1" fill="#8a8a8a"/><path d="M1 2.5 H6 L5.5 7.5 H1.5z" fill="#8a8a8a"/><path d="M2.5 3 V7 M3.5 3 V7 M4.5 3 V7" stroke="#444" stroke-width="0.4"/></svg>
<div class="a" style="left:705.8px;top:37px;width:16.6px;height:427px;background:#2a2a2a;"></div>
<div class="a" style="left:705.8px;top:37px;width:16.6px;height:7px;background:#222;"></div>
<svg style="left:716px;top:39.5px" width="4" height="2" viewBox="0 0 4 2"><path d="M0 0.5 H4 M0 1.5 H4" stroke="#666" stroke-width="0.5"/></svg>
<div class="a" style="left:722.2px;top:37px;width:0.8px;height:427px;background:#1e1e1e;"></div>
<div class="a" style="left:707px;top:75.5px;width:14px;height:0.7px;background:#1c1c1c;"></div>
<div class="a" style="left:707px;top:109px;width:14px;height:0.7px;background:#1c1c1c;"></div>
<div class="a" style="left:707px;top:129px;width:14px;height:0.7px;background:#1c1c1c;"></div>
<div class="a" style="left:707px;top:148px;width:14px;height:0.7px;background:#1c1c1c;"></div>
<div class="a" style="left:707px;top:193px;width:14px;height:0.7px;background:#1c1c1c;"></div>
<div class="a" style="left:707px;top:212px;width:14px;height:0.7px;background:#1c1c1c;"></div>
<div class="a" style="left:707px;top:231px;width:14px;height:0.7px;background:#1c1c1c;"></div>
<div class="a" style="left:707px;top:251.7px;width:14px;height:0.7px;background:#1c1c1c;"></div>
<div class="a" style="left:708px;top:93.5px;width:12px;height:12.5px;background:#1b1b1b;"></div>
<svg style="left:710.2px;top:50px" width="8" height="8" viewBox="0 0 8 8"><rect x="0.5" y="0.5" width="3" height="7.5" fill="#ccc"/><rect x="1.2" y="1.5" width="1.6" height="1" fill="#555"/><path d="M4.5 7.5 Q7.5 5 5 2.5 M4.2 2 L5.8 1.5 L5.6 3.3" fill="none" stroke="#ccc" stroke-width="1"/></svg>
<svg style="left:710.2px;top:62.400000000000006px" width="8" height="8" viewBox="0 0 8 8"><path d="M0.5 0.5 H4 V4 H0.5z M2.5 2.5 H6 V6 H2.5z M4.5 4.5 H7.5 V7.5 H4.5z" fill="none" stroke="#bbb" stroke-width="0.8"/></svg>
<svg style="left:710.2px;top:82.6px" width="8" height="8" viewBox="0 0 8 8"><circle cx="2.3" cy="5.5" r="2" fill="#ddd"/><path d="M3.5 1 H7.5 V6 H5 L3.5 3.5z" fill="#ccc"/><path d="M4.5 1 V5" stroke="#555" stroke-width="0.5"/></svg>
<svg style="left:710.2px;top:95.8px" width="8" height="8" viewBox="0 0 8 8"><circle cx="2" cy="6" r="1.8" fill="#ddd"/><text x="3.2" y="6.8" font-size="7.5" font-family="Liberation Sans" fill="#e8e8e8">A</text></svg>
<svg style="left:710.2px;top:115px" width="8" height="8" viewBox="0 0 8 8"><path d="M4 0.5 L7.5 2.3 V6 L4 7.8 L0.5 6 V2.3z M0.5 2.3 L4 4.2 L7.5 2.3 M4 4.2 V7.8" fill="none" stroke="#bbb" stroke-width="0.8"/></svg>
<svg style="left:710.2px;top:134.6px" width="8" height="8" viewBox="0 0 8 8"><circle cx="1.5" cy="4" r="1.2" fill="none" stroke="#aaa" stroke-width="0.7"/><path d="M2.5 3.5 L6.5 0.8 M2.5 4.5 L6.5 7.2 M6.5 0.8 V7.2" fill="none" stroke="#aaa" stroke-width="0.8"/></svg>
<svg style="left:710.2px;top:153px" width="8" height="8" viewBox="0 0 8 8"><circle cx="4" cy="4" r="3.5" fill="none" stroke="#ccc" stroke-width="0.8"/><path d="M4 3.2 V6.3" stroke="#ccc" stroke-width="1"/><circle cx="4" cy="2" r="0.6" fill="#ccc"/></svg>
<svg style="left:710.2px;top:166.7px" width="8" height="8" viewBox="0 0 8 8"><rect x="0.8" y="0.5" width="6.4" height="7" fill="#ccc"/><rect x="1.8" y="3.5" width="4.4" height="1" fill="#333"/><rect x="3.8" y="1.2" width="0.8" height="2" fill="#333"/></svg>
<svg style="left:710.2px;top:178.8px" width="8" height="8" viewBox="0 0 8 8"><path d="M0.8 0.5 H7.2 V5.5 L5 7.5 H0.8z" fill="#ccc"/><path d="M2 2 H6 M2 3.5 H6 M2 5 H4" stroke="#333" stroke-width="0.6"/></svg>
<svg style="left:710.2px;top:198.8px" width="8" height="8" viewBox="0 0 8 8"><path d="M3.5 0.5 H7 M4.3 0.5 V7.5 M5.8 0.5 V7.5" stroke="#ccc" stroke-width="0.9"/><circle cx="3" cy="2.6" r="2" fill="#ccc"/></svg>
<svg style="left:710.2px;top:217.4px" width="8" height="8" viewBox="0 0 8 8"><path d="M0.5 7.5 L3 0.5 L5.5 7.5 M1.5 5 H4.5 M7 0.5 V7.5" fill="none" stroke="#ccc" stroke-width="0.8"/></svg>
<svg style="left:710.2px;top:236.7px" width="8" height="8" viewBox="0 0 8 8"><text x="0.5" y="5" font-size="6" font-family="Liberation Sans" fill="#ddd">a</text><rect x="4.8" y="0.8" width="1" height="4.5" fill="#ddd"/><rect x="0.5" y="6" width="7" height="0.8" fill="#ddd"/><rect x="0.5" y="7.3" width="7" height="0.6" fill="#999"/></svg>
<div class="a" style="left:723px;top:37px;width:177px;height:427px;background:#282828;"></div>
<div class="a" style="left:723px;top:37px;width:177px;height:6px;background:#222;"></div>
<svg style="left:892px;top:39px" width="4" height="2" viewBox="0 0 4 2"><path d="M0 0.5 H4 M0 1.5 H4" stroke="#666" stroke-width="0.5"/></svg>
<div class="a" style="left:723px;top:43px;width:177px;height:13px;background:#202020;"></div>
<div class="a" style="left:723px;top:43.5px;width:30px;height:12.5px;background:#2b2b2b;"></div>
<span class="t" style="left:728px;top:47.75px;font-size:4.97px;color:#e6e6e6;font-weight:bold;">Libraries</span>
<span class="t" style="left:757px;top:47.70px;font-size:5.44px;color:#8e8e8e;font-weight:normal;">Color</span>
<span class="t" style="left:778.5px;top:47.90px;font-size:5.3px;color:#8e8e8e;font-weight:normal;">Swatches</span>
<svg style="left:893.5px;top:47.5px" width="5" height="4" viewBox="0 0 5 4"><path d="M0 0.5 H5 M0 2 H5 M0 3.5 H5" stroke="#777" stroke-width="0.8"/></svg>
<div class="a" style="left:723px;top:56px;width:177px;height:85px;background:#272727;"></div>
<div class="a" style="left:729px;top:61px;width:142px;height:8px;background:#1e1e1e;"></div>
<span class="t" style="left:733px;top:63.10px;font-size:5.12px;color:#d6d6d6;font-weight:normal;">Color Schemes</span>
<svg style="left:865px;top:64px" width="4" height="3" viewBox="0 0 4 3"><path d="M0.3 0.5 L2 2.2 L3.7 0.5" fill="none" stroke="#8a8a8a" stroke-width="0.7"/></svg>
<div class="a" style="left:876px;top:60.5px;width:9px;height:9px;background:#161616;"></div>
<svg style="left:877.8px;top:62.3px" width="5.5" height="5.5" viewBox="0 0 6 6"><rect x="0" y="0" width="2.6" height="2.6" fill="#eee"/><rect x="3.4" y="0" width="2.6" height="2.6" fill="#eee"/><rect x="0" y="3.4" width="2.6" height="2.6" fill="#eee"/><rect x="3.4" y="3.4" width="2.6" height="2.6" fill="#eee"/></svg>
<svg style="left:889.5px;top:62.3px" width="5.5" height="5.5" viewBox="0 0 6 6"><rect x="0" y="0" width="6" height="6" fill="#777"/><path d="M0 1.5 H6 M0 3 H6 M0 4.5 H6" stroke="#333" stroke-width="0.5"/></svg>
<svg style="left:727.5px;top:75.5px" width="6" height="6" viewBox="0 0 6 6"><circle cx="3.8" cy="2.2" r="1.7" fill="none" stroke="#888" stroke-width="0.8"/><path d="M2.6 3.4 L0.5 5.5" stroke="#888" stroke-width="0.9"/></svg>
<span class="t" style="left:735px;top:76.60px;font-size:5.14px;color:#5e5e5e;font-weight:normal;">Search Current Library</span>
<svg style="left:892px;top:77.5px" width="4" height="3" viewBox="0 0 4 3"><path d="M0.3 0.5 L2 2.2 L3.7 0.5" fill="none" stroke="#777" stroke-width="0.7"/></svg>
<div class="a" style="left:726px;top:83px;width:174px;height:0.8px;background:#1f1f1f;"></div>
<svg style="left:728.5px;top:92.8px" width="4" height="3" viewBox="0 0 4 3"><path d="M0 0 H4 L2 3z" fill="#cfcfcf"/></svg>
<span class="t" style="left:734px;top:92.40px;font-size:5.27px;color:#8e8e8e;font-weight:normal;">Color Themes</span>
<div class="a" style="left:729px;top:100px;width:19px;height:13px;background:#0d3138;"></div>
<div class="a" style="left:748px;top:100px;width:19px;height:13px;background:#6f8a5f;"></div>
<div class="a" style="left:767px;top:100px;width:19px;height:13px;background:#e07e50;"></div>
<div class="a" style="left:786px;top:100px;width:19px;height:13px;background:#fbb15f;"></div>
<div class="a" style="left:805px;top:100px;width:19px;height:13px;background:#fdea5c;"></div>
<div class="a" style="left:729px;top:113px;width:95px;height:7.5px;background:#333333;"></div>
<span class="t" style="left:730.5px;top:114.70px;font-size:5.15px;color:#d4d4d4;font-weight:normal;">Vegas Sunset</span>
<div class="a" style="left:723px;top:141px;width:177px;height:10.5px;background:#2c2c2c;"></div>
<svg style="left:728.5px;top:143.5px" width="7" height="7" viewBox="0 0 7 7"><path d="M3 0.5 V5.5 M0.5 3 H5.5" stroke="#ccc" stroke-width="1.1"/><circle cx="6" cy="6.3" r="0.5" fill="#aaa"/></svg>
<svg style="left:740.5px;top:143.3px" width="6" height="7" viewBox="0 0 6 7"><path d="M3 0.5 L5.5 3 H4 V5 H2 V3 H0.5z" fill="#ccc"/><rect x="0.5" y="5.8" width="5" height="1" fill="#ccc"/></svg>
<svg style="left:878.5px;top:143.5px" width="8" height="6" viewBox="0 0 8 6"><path d="M2 5.5 A2 2 0 0 1 1.5 2 A2.5 2.5 0 0 1 6.2 1.8 A1.9 1.9 0 0 1 6.5 5.5z" fill="#bbb"/><circle cx="4.2" cy="3.6" r="1.2" fill="#444"/></svg>
<svg style="left:890.5px;top:143px" width="6" height="7" viewBox="0 0 6 7"><rect x="0" y="0.8" width="6" height="0.9" fill="#aaa"/><rect x="2" y="0" width="2" height="0.9" fill="#aaa"/><path d="M0.7 2 H5.3 L4.9 7 H1.1z" fill="#aaa"/><path d="M2.2 2.5 V6.5 M3 2.5 V6.5 M3.8 2.5 V6.5" stroke="#444" stroke-width="0.35"/></svg>
<div class="a" style="left:723px;top:151.5px;width:177px;height:1.5px;background:#1e1e1e;"></div>
<div class="a" style="left:723px;top:153px;width:177px;height:11.5px;background:#202020;"></div>
<div class="a" style="left:723px;top:153px;width:23.5px;height:11.5px;background:#252525;"></div>
<span class="t" style="left:728px;top:157.10px;font-size:5.14px;color:#8a8a8a;font-weight:normal;">Styles</span>
<div class="a" style="left:747px;top:153px;width:37.5px;height:11.5px;background:#2b2b2b;"></div>
<span class="t" style="left:750.3px;top:156.95px;font-size:5.12px;color:#e6e6e6;font-weight:bold;">Adjustments</span>
<svg style="left:893.5px;top:157px" width="5" height="4" viewBox="0 0 5 4"><path d="M0 0.5 H5 M0 2 H5 M0 3.5 H5" stroke="#777" stroke-width="0.8"/></svg>
<div class="a" style="left:723px;top:164.5px;width:177px;height:50px;background:#272727;"></div>
<span class="t" style="left:728px;top:169.70px;font-size:5.4px;color:#d0d0d0;font-weight:normal;">Add an adjustment</span>
<svg style="left:745.5px;top:177.0px" width="9" height="7" viewBox="0 0 9 7"><circle cx="4.5" cy="3.5" r="2" fill="#eee"/><path d="M4.5 3.5 V1.5 A2 2 0 0 0 4.5 5.5z" fill="#333"/><path d="M4.5 0 V0.9 M4.5 6.1 V7 M1 3.5 H2 M7 3.5 H8 M2 1 L2.7 1.7 M6.3 5.3 L7 6 M2 6 L2.7 5.3 M6.3 1.7 L7 1" stroke="#ddd" stroke-width="0.6"/></svg>
<svg style="left:756.8px;top:177.0px" width="9" height="7" viewBox="0 0 9 7"><path d="M0.3 6.5 V5 L1.5 3.8 L3 3.2 L4.3 1.5 L5.5 2.5 L7 2.8 L8.7 4.5 V6.5z" fill="#e0e0e0"/></svg>
<svg style="left:768.0px;top:177.0px" width="9" height="7" viewBox="0 0 9 7"><rect x="0.5" y="0.5" width="8" height="6" rx="0.6" fill="#3a3a3a" stroke="#d6d6d6" stroke-width="0.9"/><path d="M1.2 6 Q4 5.5 4.5 3.5 Q5 1.5 7.8 1" fill="none" stroke="#e8e8e8" stroke-width="0.8"/><path d="M3 0.5 V6.5 M6 0.5 V6.5" stroke="#777" stroke-width="0.4"/></svg>
<svg style="left:779.5px;top:177.0px" width="9" height="7" viewBox="0 0 9 7"><rect x="0.5" y="0.5" width="8" height="6" rx="0.6" fill="#3a3a3a" stroke="#d6d6d6" stroke-width="0.9"/><path d="M1.2 6 L7.8 1" stroke="#e8e8e8" stroke-width="0.8"/></svg>
<svg style="left:790.8px;top:177.0px" width="9" height="7" viewBox="0 0 9 7"><path d="M1 0.8 H8 L4.5 6.5z" fill="none" stroke="#cfcfcf" stroke-width="0.8"/></svg>
<svg style="left:740.0px;top:189.9px" width="9" height="7" viewBox="0 0 9 7"><rect x="0.5" y="0.5" width="8" height="6" rx="0.6" fill="#3a3a3a" stroke="#d6d6d6" stroke-width="0.9"/><path d="M1.3 2.3 H7.7 M1.3 4.6 H7.7" stroke="#e0e0e0" stroke-width="0.8"/><rect x="2" y="1.5" width="1.2" height="1.5" fill="#eee"/><rect x="5.5" y="3.8" width="1.2" height="1.5" fill="#eee"/></svg>
<svg style="left:751.5px;top:189.9px" width="9" height="7" viewBox="0 0 9 7"><path d="M4.5 0.5 V6 M1.3 1.5 H7.7" stroke="#ddd" stroke-width="0.7"/><path d="M0.2 4 A1.6 1.6 0 0 0 3.2 4z M5.8 4 A1.6 1.6 0 0 0 8.8 4z" fill="#eee"/><path d="M1.7 1.5 L0.2 4 M1.7 1.5 L3.2 4 M7.3 1.5 L5.8 4 M7.3 1.5 L8.8 4" stroke="#ccc" stroke-width="0.5"/></svg>
<svg style="left:762.4px;top:189.9px" width="9" height="7" viewBox="0 0 9 7"><rect x="0.5" y="0.5" width="8" height="6" rx="0.6" fill="url(#g2)" stroke="#d0d0d0" stroke-width="0.9"/><rect x="3.8" y="1.8" width="1.4" height="3.4" fill="#111"/></svg>
<svg style="left:773.2px;top:189.9px" width="9" height="7" viewBox="0 0 9 7"><circle cx="3.8" cy="3.3" r="2.9" fill="#ddd"/><circle cx="3.8" cy="3.3" r="1.6" fill="#555"/><circle cx="6.6" cy="5" r="1.8" fill="#444" stroke="#ddd" stroke-width="0.7"/></svg>
<svg style="left:784.8px;top:189.9px" width="9" height="7" viewBox="0 0 9 7"><circle cx="4.5" cy="2.3" r="2" fill="#e6e6e6"/><circle cx="3" cy="4.7" r="2" fill="#e6e6e6"/><circle cx="6" cy="4.7" r="2" fill="#e6e6e6"/><circle cx="4.5" cy="3.9" r="0.9" fill="#333"/></svg>
<svg style="left:796.4px;top:189.9px" width="9" height="7" viewBox="0 0 9 7"><rect x="0.5" y="0.5" width="8" height="6" rx="0.6" fill="#9a9a9a" stroke="#d6d6d6" stroke-width="0.9"/><path d="M3.2 0.5 V6.5 M5.8 0.5 V6.5 M0.5 2.5 H8.5 M0.5 4.5 H8.5" stroke="#555" stroke-width="0.5"/></svg>
<svg style="left:745.5px;top:202.8px" width="9" height="7" viewBox="0 0 9 7"><rect x="0.5" y="0.5" width="8" height="6" rx="0.6" fill="#3a3a3a" stroke="#d6d6d6" stroke-width="0.9"/><path d="M2.5 5 Q4.5 4.8 4.5 3.5 Q4.5 2 6.5 2" fill="none" stroke="#eee" stroke-width="1"/></svg>
<svg style="left:756.8px;top:202.8px" width="9" height="7" viewBox="0 0 9 7"><rect x="0.5" y="0.5" width="8" height="6" rx="0.6" fill="#888" stroke="#d6d6d6" stroke-width="0.9"/><path d="M1 6 L8 1" stroke="#333" stroke-width="1.6"/></svg>
<svg style="left:768.0px;top:202.8px" width="9" height="7" viewBox="0 0 9 7"><rect x="0.5" y="0.5" width="8" height="6" rx="0.6" fill="#aaa" stroke="#d6d6d6" stroke-width="0.9"/><path d="M1 4.5 L8 2" stroke="#222" stroke-width="1.3"/></svg>
<svg style="left:779.5px;top:202.8px" width="9" height="7" viewBox="0 0 9 7"><rect x="0.5" y="0.5" width="8" height="6" rx="0.6" fill="#bbb" stroke="#d6d6d6" stroke-width="0.9"/><path d="M1 1.2 L4.5 4 L8 1.2 V5.8 L4.5 4 L1 5.8z" fill="#333"/></svg>
<svg style="left:790.8px;top:202.8px" width="9" height="7" viewBox="0 0 9 7"><rect x="0.5" y="0.5" width="8" height="6" rx="0.6" fill="url(#g2)" stroke="#d6d6d6" stroke-width="0.9"/></svg>
<svg width="0" height="0" style="left:0;top:0"><defs><linearGradient id="g2"><stop offset="0" stop-color="#222"/><stop offset="1" stop-color="#ccc"/></linearGradient></defs></svg>
<div class="a" style="left:723px;top:214.5px;width:177px;height:2px;background:#1e1e1e;"></div>
<div class="a" style="left:723px;top:216.5px;width:177px;height:12.5px;background:#202020;"></div>
<div class="a" style="left:723px;top:216.5px;width:27.5px;height:12.5px;background:#252525;"></div>
<div class="a" style="left:751.5px;top:216.5px;width:24.5px;height:12.5px;background:#252525;"></div>
<span class="t" style="left:728px;top:220.90px;font-size:5.21px;color:#8a8a8a;font-weight:normal;">Channels</span>
<span class="t" style="left:758px;top:221.10px;font-size:5.47px;color:#8a8a8a;font-weight:normal;">Paths</span>
<div class="a" style="left:777px;top:216.5px;width:23.5px;height:12.5px;background:#2b2b2b;"></div>
<span class="t" style="left:780px;top:220.95px;font-size:4.96px;color:#e6e6e6;font-weight:bold;">Layers</span>
<svg style="left:893.5px;top:221px" width="5" height="4" viewBox="0 0 5 4"><path d="M0 0.5 H5 M0 2 H5 M0 3.5 H5" stroke="#777" stroke-width="0.8"/></svg>
<div class="a" style="left:723px;top:229px;width:177px;height:40px;background:#282828;"></div>
<div class="a" style="left:728px;top:233.8px;width:39px;height:7.4px;background:#1e1e1e;"></div>
<svg style="left:730px;top:234.8px" width="5" height="5" viewBox="0 0 5 5"><circle cx="3.2" cy="1.8" r="1.4" fill="none" stroke="#ccc" stroke-width="0.6"/><path d="M2.2 2.8 L0.4 4.6" stroke="#ccc" stroke-width="0.8"/></svg>
<span class="t" style="left:735.5px;top:235.60px;font-size:5.0px;color:#d8d8d8;font-weight:normal;">Kind</span>
<svg style="left:762px;top:236.5px" width="4" height="3" viewBox="0 0 4 3"><path d="M0.3 0.5 L2 2.2 L3.7 0.5" fill="none" stroke="#999" stroke-width="0.7"/></svg>
<svg style="left:772.5px;top:233.5px" width="7" height="7" viewBox="0 0 7 7"><rect x="0.5" y="0.8" width="6" height="5.4" fill="none" stroke="#bbb" stroke-width="0.8"/><rect x="1.5" y="3.5" width="4" height="1.8" fill="#bbb"/></svg>
<svg style="left:783.1px;top:233.5px" width="7" height="7" viewBox="0 0 7 7"><circle cx="3.5" cy="3.5" r="2.9" fill="none" stroke="#ccc" stroke-width="0.8"/><path d="M3.5 0.6 A2.9 2.9 0 0 1 3.5 6.4z" fill="#ccc"/></svg>
<svg style="left:794.5px;top:233.5px" width="7" height="7" viewBox="0 0 7 7"><path d="M0.8 1.2 H6.2 M3.5 1.2 V6.5 M2.3 6.5 H4.7" stroke="#ddd" stroke-width="1"/></svg>
<svg style="left:805.5px;top:233.5px" width="7" height="7" viewBox="0 0 7 7"><rect x="1" y="1" width="5" height="5" fill="none" stroke="#ccc" stroke-width="0.8"/><path d="M0 1 H1.5 M5.5 1 H7 M0 6 H1.5 M5.5 6 H7" stroke="#ccc" stroke-width="0.8"/></svg>
<svg style="left:817.5px;top:233.5px" width="7" height="7" viewBox="0 0 7 7"><path d="M1 6.5 V3 Q3.5 0 6 3 V6.5z" fill="#ddd"/><circle cx="4.8" cy="4.8" r="1.5" fill="#444"/></svg>
<svg style="left:830px;top:232px" width="4" height="9" viewBox="0 0 4 9"><circle cx="2" cy="2" r="1.7" fill="#f0f0f0"/><rect x="1.2" y="4" width="1.6" height="4.5" rx="0.8" fill="#555"/></svg>
<div class="a" style="left:728px;top:246.6px;width:60px;height:6.6px;background:#1e1e1e;"></div>
<span class="t" style="left:729.5px;top:248.00px;font-size:5.27px;color:#d8d8d8;font-weight:normal;">Normal</span>
<svg style="left:782px;top:248.5px" width="4" height="3" viewBox="0 0 4 3"><path d="M0.3 0.5 L2 2.2 L3.7 0.5" fill="none" stroke="#999" stroke-width="0.7"/></svg>
<span class="t" style="left:790px;top:249.00px;font-size:4.91px;color:#8a8a8a;font-weight:normal;">Opacity:</span>
<div class="a" style="left:810.5px;top:246.6px;width:15px;height:6.6px;background:#1e1e1e;"></div>
<span class="t" style="left:811.5px;top:248.00px;font-size:5.0px;color:#cfcfcf;font-weight:normal;">100%</span>
<div class="a" style="left:827.5px;top:246.6px;width:6px;height:6.6px;background:#1e1e1e;"></div>
<svg style="left:828.8px;top:248.6px" width="4" height="3" viewBox="0 0 4 3"><path d="M0.3 0.5 L2 2.2 L3.7 0.5" fill="none" stroke="#999" stroke-width="0.7"/></svg>
<span class="t" style="left:727px;top:261.10px;font-size:4.6px;color:#8a8a8a;font-weight:normal;">Lock:</span>
<svg style="left:741px;top:259px" width="6" height="6" viewBox="0 0 6 6"><rect x="0.5" y="0.5" width="5" height="5" fill="none" stroke="#888" stroke-width="0.6" stroke-dasharray="1 0.6"/><rect x="2" y="2" width="2" height="2" fill="#999"/></svg>
<svg style="left:752px;top:259px" width="6" height="6" viewBox="0 0 6 6"><path d="M5.5 0.5 L0.5 5.5" stroke="#ccc" stroke-width="0.9"/></svg>
<svg style="left:761.6px;top:259px" width="6" height="6" viewBox="0 0 6 6"><path d="M3 0 V6 M0 3 H6 M2 1 L3 0 L4 1 M2 5 L3 6 L4 5 M1 2 L0 3 L1 4 M5 2 L6 3 L5 4" fill="none" stroke="#ccc" stroke-width="0.7"/></svg>
<svg style="left:772px;top:259px" width="6" height="6" viewBox="0 0 6 6"><rect x="1" y="1" width="4.5" height="4.5" fill="none" stroke="#bbb" stroke-width="0.7"/><path d="M0 1 H1.5 M1 0 V1.5" stroke="#bbb" stroke-width="0.7"/></svg>
<svg style="left:782px;top:259px" width="6" height="6" viewBox="0 0 6 6"><path d="M1.8 2.8 V1.8 A1.2 1.2 0 0 1 4.2 1.8 V2.8" fill="none" stroke="#ddd" stroke-width="0.7"/><rect x="1" y="2.8" width="4" height="3" fill="#ddd"/></svg>
<span class="t" style="left:802px;top:260.10px;font-size:5.14px;color:#8a8a8a;font-weight:normal;">Fill:</span>
<div class="a" style="left:810.5px;top:258.7px;width:15px;height:6.6px;background:#1e1e1e;"></div>
<span class="t" style="left:811.5px;top:260.10px;font-size:5.0px;color:#cfcfcf;font-weight:normal;">100%</span>
<div class="a" style="left:827.5px;top:258.7px;width:6px;height:6.6px;background:#1e1e1e;"></div>
<svg style="left:828.8px;top:260.7px" width="4" height="3" viewBox="0 0 4 3"><path d="M0.3 0.5 L2 2.2 L3.7 0.5" fill="none" stroke="#999" stroke-width="0.7"/></svg>
<div class="a" style="left:723px;top:269px;width:172px;height:195px;background:#292929;"></div>
<div class="a" style="left:737px;top:269px;width:158px;height:41px;background:#3d3d3d;"></div>
<svg style="left:727.5px;top:287.5px" width="7" height="5" viewBox="0 0 7 5"><path d="M0.3 2.5 Q3.5 -1 6.7 2.5 Q3.5 6 0.3 2.5z" fill="#d8d8d8"/><circle cx="3.5" cy="2.5" r="1.1" fill="#292929"/></svg>
<svg style="left:738.5px;top:270px" width="32" height="39" viewBox="0 0 32 39"><path d="M0.5 11 V0.5 H9.5 M22 0.5 H31.5 V11 M31.5 27.5 V38.5 H22 M9.5 38.5 H0.5 V27.5" fill="none" stroke="#a0a0a0" stroke-width="1"/></svg>
<span class="t" style="left:751.2px;top:284px;font-size:10px;font-family:'Liberation Serif';color:#d8d8d8">T</span>
<span class="t" style="left:773px;top:288.60px;font-size:5.05px;color:#e0e0e0;font-weight:normal;">Melissa Harris</span>
<div class="a" style="left:723px;top:310px;width:172px;height:1px;background:#252525;"></div>
<div class="a" style="left:740px;top:312.4px;width:29px;height:36.60000000000002px;background:#e6e6e6;background-image:radial-gradient(#cdcdcd 0.55px, transparent 0.65px);background-size:2px 2px"></div>
<div class="a" style="left:757.8px;top:315.7px;width:7px;height:1.3px;background:#8a8a8a;"></div>
<div class="a" style="left:763.5px;top:343px;width:5.5px;height:6px;background:#222;"></div>
<svg style="left:764px;top:343.5px" width="5" height="5" viewBox="0 0 5 5"><path d="M0.5 0.5 H4.5 V4.5 H0.5z M2.5 0.5 V4.5 M0.5 2.5 H4.5" fill="none" stroke="#ddd" stroke-width="0.7"/></svg>
<svg style="left:727.5px;top:328.5px" width="7" height="5" viewBox="0 0 7 5"><path d="M0.3 2.5 Q3.5 -1 6.7 2.5 Q3.5 6 0.3 2.5z" fill="#d8d8d8"/><circle cx="3.5" cy="2.5" r="1.1" fill="#292929"/></svg>
<span class="t" style="left:773px;top:329.40px;font-size:5.02px;color:#d8d8d8;font-weight:normal;">Rectangle 1 copy 2</span>
<div class="a" style="left:723px;top:350.5px;width:172px;height:1.5px;background:#262626;"></div>
<div class="a" style="left:740px;top:353px;width:29px;height:36.60000000000002px;background:#e6e6e6;background-image:radial-gradient(#cdcdcd 0.55px, transparent 0.65px);background-size:2px 2px"></div>
<div class="a" style="left:751px;top:356.3px;width:7px;height:1.3px;background:#e38a60;"></div>
<div class="a" style="left:763.5px;top:383.6px;width:5.5px;height:6px;background:#222;"></div>
<svg style="left:764px;top:384.1px" width="5" height="5" viewBox="0 0 5 5"><path d="M0.5 0.5 H4.5 V4.5 H0.5z M2.5 0.5 V4.5 M0.5 2.5 H4.5" fill="none" stroke="#ddd" stroke-width="0.7"/></svg>
<svg style="left:727.5px;top:369.5px" width="7" height="5" viewBox="0 0 7 5"><path d="M0.3 2.5 Q3.5 -1 6.7 2.5 Q3.5 6 0.3 2.5z" fill="#d8d8d8"/><circle cx="3.5" cy="2.5" r="1.1" fill="#292929"/></svg>
<span class="t" style="left:773px;top:370.40px;font-size:5.05px;color:#d8d8d8;font-weight:normal;">Rectangle 1 copy</span>
<div class="a" style="left:723px;top:391px;width:172px;height:1.5px;background:#262626;"></div>
<div class="a" style="left:740px;top:394px;width:29px;height:36.39999999999998px;background:#e6e6e6;background-image:radial-gradient(#cdcdcd 0.55px, transparent 0.65px);background-size:2px 2px"></div>
<div class="a" style="left:743.5px;top:397.3px;width:7px;height:1.3px;background:#e8e0a8;"></div>
<div class="a" style="left:763.5px;top:424.4px;width:5.5px;height:6px;background:#222;"></div>
<svg style="left:764px;top:424.9px" width="5" height="5" viewBox="0 0 5 5"><path d="M0.5 0.5 H4.5 V4.5 H0.5z M2.5 0.5 V4.5 M0.5 2.5 H4.5" fill="none" stroke="#ddd" stroke-width="0.7"/></svg>
<svg style="left:727.5px;top:410.5px" width="7" height="5" viewBox="0 0 7 5"><path d="M0.3 2.5 Q3.5 -1 6.7 2.5 Q3.5 6 0.3 2.5z" fill="#d8d8d8"/><circle cx="3.5" cy="2.5" r="1.1" fill="#292929"/></svg>
<span class="t" style="left:773px;top:411.40px;font-size:5.06px;color:#d8d8d8;font-weight:normal;">Rectangle 1</span>
<div class="a" style="left:723px;top:432px;width:172px;height:1.5px;background:#262626;"></div>
<div class="a" style="left:740px;top:435px;width:29px;height:29px;background:linear-gradient(#f2f2f2,#e0e0e0)"></div>
<svg style="left:727.5px;top:451.5px" width="7" height="5" viewBox="0 0 7 5"><path d="M0.3 2.5 Q3.5 -1 6.7 2.5 Q3.5 6 0.3 2.5z" fill="#d8d8d8"/><circle cx="3.5" cy="2.5" r="1.1" fill="#292929"/></svg>
<span class="t" style="left:773px;top:452.40px;font-size:5.06px;color:#b4b4b4;font-weight:normal;">Background</span>
<div class="a" style="left:895px;top:269px;width:5px;height:195px;background:#232323;"></div>
<div class="a" style="left:896px;top:407px;width:3.5px;height:57px;background:#3a3a3a;"></div>
<svg style="left:858px;top:13.5px" width="25" height="25" viewBox="0 0 25 25"><circle cx="12.3" cy="11.8" r="11.8" fill="#1a1a1a" opacity="0.6"/><circle cx="12.3" cy="11.8" r="10.9" fill="#efefef"/><circle cx="12.3" cy="6.5" r="1.3" fill="#111"/><rect x="11.2" y="9.2" width="2.2" height="8.2" fill="#111"/></svg>
<svg style="left:834px;top:405px" width="66" height="59" viewBox="0 0 66 59"><polygon points="4.8,16.5 19.1,5.7 19.1,26.0" fill="#ffb400" stroke="#ffb400" stroke-width="0.4" stroke-linejoin="round"/><polygon points="19.1,5.7 33.3,16.0 19.1,26.0" fill="#ff9c00" stroke="#ff9c00" stroke-width="0.4" stroke-linejoin="round"/><polygon points="4.8,16.5 19.1,26.0 4.8,35.6" fill="#ffa800" stroke="#ffa800" stroke-width="0.4" stroke-linejoin="round"/><polygon points="19.1,26.0 33.3,16.0 33.3,36.0" fill="#ff7a00" stroke="#ff7a00" stroke-width="0.4" stroke-linejoin="round"/><polygon points="4.8,35.6 19.1,26.0 19.1,45.5" fill="#ff8e00" stroke="#ff8e00" stroke-width="0.4" stroke-linejoin="round"/><polygon points="19.1,26.0 33.3,36.0 19.1,45.5" fill="#dc3600" stroke="#dc3600" stroke-width="0.4" stroke-linejoin="round"/><polygon points="19.1,45.5 33.3,36.0 33.3,56.0" fill="#c42800" stroke="#c42800" stroke-width="0.4" stroke-linejoin="round"/><polygon points="47.7,5.7 62.1,16.5 47.7,26.0" fill="#ffd94a" stroke="#ffd94a" stroke-width="0.4" stroke-linejoin="round"/><polygon points="33.3,16.0 47.7,5.7 47.7,26.0" fill="#ffc21c" stroke="#ffc21c" stroke-width="0.4" stroke-linejoin="round"/><polygon points="62.1,16.5 47.7,26.0 62.1,35.6" fill="#ffc000" stroke="#ffc000" stroke-width="0.4" stroke-linejoin="round"/><polygon points="33.3,16.0 47.7,26.0 33.3,36.0" fill="#ff9200" stroke="#ff9200" stroke-width="0.4" stroke-linejoin="round"/><polygon points="62.1,35.6 47.7,26.0 47.7,45.5" fill="#ff8c00" stroke="#ff8c00" stroke-width="0.4" stroke-linejoin="round"/><polygon points="47.7,26.0 33.3,36.0 47.7,45.5" fill="#e2321c" stroke="#e2321c" stroke-width="0.4" stroke-linejoin="round"/><polygon points="33.3,36.0 47.7,45.5 33.3,56.0" fill="#b51c0e" stroke="#b51c0e" stroke-width="0.4" stroke-linejoin="round"/></svg>
</div></body></html>
